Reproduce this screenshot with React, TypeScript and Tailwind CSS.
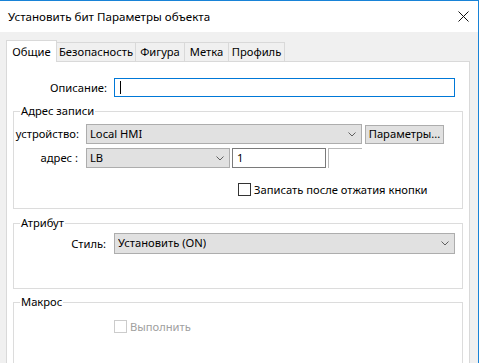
import React from 'react';

const font = { fontFamily: '"Noto Sans", "Liberation Sans", sans-serif' };

function Chevron() {
  return (
    <svg width="8" height="5" viewBox="0 0 8 5" className="shrink-0">
      <path d="M0.5 0.5 L4 4 L7.5 0.5" fill="none" stroke="#5f5f5f" strokeWidth="1" />
    </svg>
  );
}

function Combo({ value, className }: { value: string; className: string }) {
  return (
    <div
      className={`flex items-center justify-between bg-[#e1e1e1] border border-[#adadad] pl-[3px] pr-[5px] ${className}`}
    >
      <span className="truncate">{value}</span>
      <Chevron />
    </div>
  );
}

function Group({ title, className, children }: { title: string; className: string; children?: React.ReactNode }) {
  return (
    <div className={`relative ml-[6px] w-[450px] border border-[#dcdcdc] ${className}`}>
      <span className="absolute left-[6px] top-[-9px] bg-white px-[1px] leading-[16px]">{title}</span>
      {children}
    </div>
  );
}

function CheckBox({ disabled }: { disabled?: boolean }) {
  return (
    <span
      className={`inline-block w-[13px] h-[13px] bg-white border ${disabled ? 'border-[#cccccc]' : 'border-[#333333]'}`}
    />
  );
}

const tabs = [
  { name: 'Безопасность', w: 'w-[80px]' },
  { name: 'Фигура', w: 'w-[50px]' },
  { name: 'Метка', w: 'w-[45px]' },
  { name: 'Профиль', w: 'w-[57px]' },
];

export default function App() {
  return (
    <div
      style={font}
      className="w-[479px] h-[363px] overflow-hidden bg-[#f0f0f0] border-t border-r border-[#1883d7] text-[11.2px] text-black flex flex-col"
    >
      {/* title bar */}
      <div className="h-[31px] shrink-0 bg-white flex items-center justify-between pl-[8px] pr-[9px]">
        <span className="leading-none text-[11.6px]">Установить бит Параметры объекта</span>
        <svg width="11" height="11" viewBox="0 0 11 11">
          <path d="M0.5 0.5 L10.5 10.5 M10.5 0.5 L0.5 10.5" stroke="#111" strokeWidth="1" />
        </svg>
      </div>

      {/* tabs */}
      <div className="flex items-end pl-[6px] pt-[7px] h-[29px] shrink-0">
        <div className="relative z-10 w-[51px] h-[22px] -mb-px bg-white border border-b-0 border-[#d9d9d9] flex items-center justify-center leading-none">
          Общие
        </div>
        {tabs.map(t => (
          <div
            key={t.name}
            className={`${t.w} -ml-px h-[19px] bg-[#f0f0f0] border border-b-0 border-[#d9d9d9] flex items-center justify-center leading-none`}
          >
            {t.name}
          </div>
        ))}
      </div>

      {/* panel */}
      <div className="ml-[6px] w-[464px] flex-1 bg-white border border-[#d9d9d9] border-b-0 flex flex-col">
        <div className="flex items-center mt-[16px]">
          <span className="w-[100px] text-right leading-none">Описание:</span>
          <div className="ml-[7px] w-[341px] h-[19px] border border-[#0078d7] flex items-center pl-[5px]">
            <span className="w-px h-[13px] bg-black" />
          </div>
        </div>

        <Group title="Адрес записи" className="mt-[14px] h-[98px]">
          <div className="flex items-center mt-[12px]">
            <span className="w-[65px] text-right leading-none">устройство:</span>
            <Combo value="Local HMI" className="ml-[7px] w-[276px] h-[20px]" />
            <div className="ml-[3px] w-[79px] h-[19px] bg-[#e1e1e1] border border-[#adadad] flex items-center justify-center leading-none">
              Параметры...
            </div>
          </div>
          <div className="flex items-center mt-[4px]">
            <span className="w-[65px] text-right leading-none pr-[1px]">адрес :</span>
            <Combo value="LB" className="ml-[7px] w-[144px] h-[20px]" />
            <div className="ml-[2px] w-[94px] h-[20px] border border-[#7a7a7a] flex items-center pl-[4px] leading-none">
              1
            </div>
            <div className="ml-[2px] w-[34px] h-[20px] border-t border-l border-[#b9b9b9]" />
          </div>
          <div className="flex items-center mt-[15px] pl-[224px] gap-[3px]">
            <CheckBox />
            <span className="leading-none">Записать после отжатия кнопки</span>
          </div>
        </Group>

        <Group title="Атрибут" className="mt-[14px] h-[66px]">
          <div className="flex items-center mt-[9px]">
            <span className="w-[92px] text-right leading-none">Стиль:</span>
            <Combo value="Установить (ON)" className="ml-[8px] w-[341px] h-[21px]" />
          </div>
        </Group>

        <Group title="Макрос" className="mt-[13px] flex-1 border-b-0">
          <div className="flex items-center mt-[17px] pl-[100px] gap-[3px]">
            <CheckBox disabled />
            <span className="leading-none text-[#a0a0a0]">Выполнить</span>
          </div>
        </Group>
      </div>
    </div>
  );
}
